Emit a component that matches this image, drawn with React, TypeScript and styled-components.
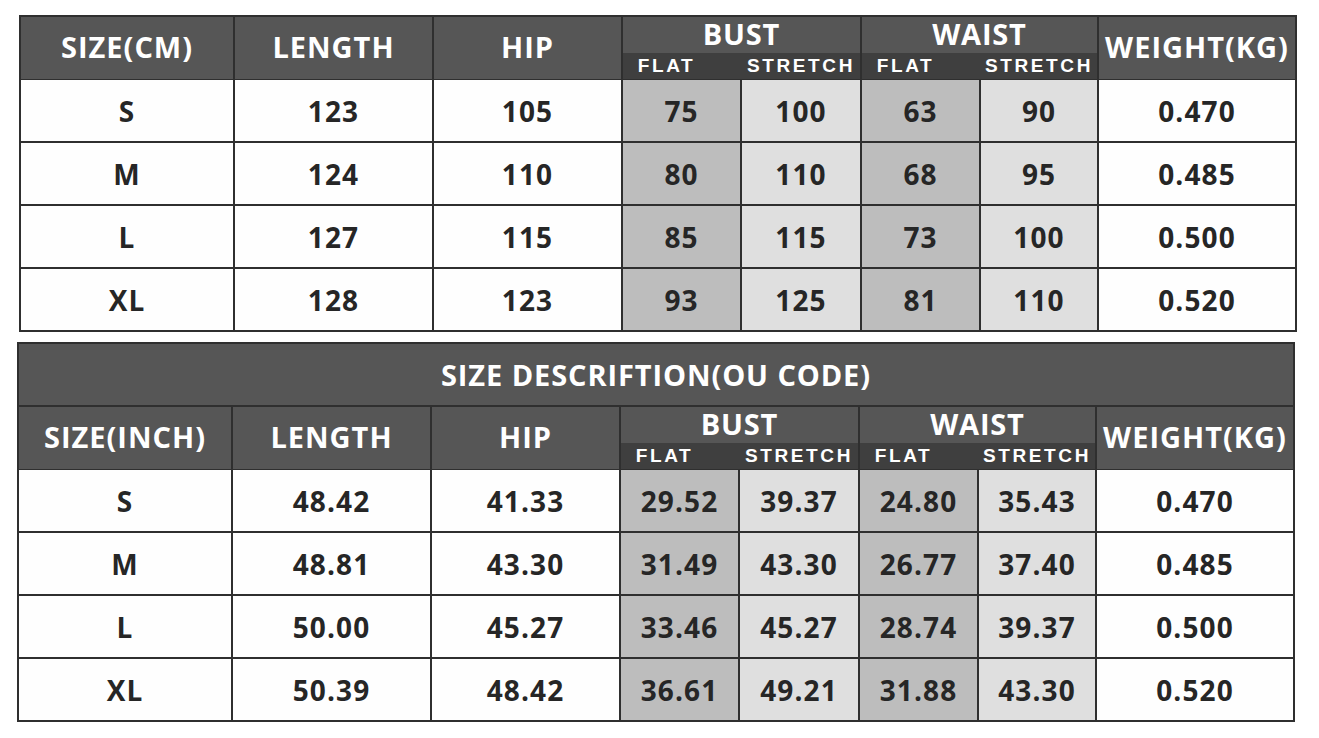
import React, { ReactElement } from 'react';
import styled, { createGlobalStyle } from 'styled-components';

const GlobalStyle = createGlobalStyle`
  body {
    margin: 0;
    background: #fff;
    font-family: 'Open Sans', 'Liberation Sans', sans-serif;
  }
`;

const Page = styled.div`
  width: 1319px;
  height: 738px;
  padding-top: 15px;
  box-sizing: border-box;
  display: flex;
  flex-direction: column;
  gap: 10px;
`;

const Table = styled.div<{ $offset: number }>`
  margin-left: ${(p) => p.$offset}px;
  width: 1278px;
  box-sizing: border-box;
  display: grid;
  grid-template-columns: 212px 197px 187px 117px 118px 117px 116px 196px;
  grid-auto-rows: 61px;
  gap: 2px;
  padding: 2px;
  background: #2f2f2f;
`;

const Title = styled.div`
  grid-column: 1 / -1;
  background: #565656;
  color: #fff;
  font-weight: 700;
  font-size: 29px;
  letter-spacing: 0.9px;
  display: flex;
  align-items: center;
  justify-content: center;
`;

const HeadCell = styled.div`
  background: #565656;
  color: #fff;
  font-weight: 700;
  font-size: 29px;
  letter-spacing: 1px;
  display: flex;
  align-items: center;
  justify-content: center;
  height: 62px;
  padding-bottom: 3px;
  box-sizing: border-box;
`;

const Group = styled.div`
  grid-column: span 2;
  height: 62px;
  display: flex;
  flex-direction: column;
  background: #565656;
  color: #fff;
`;

const GroupTitle = styled.div`
  flex: 1;
  display: flex;
  align-items: center;
  justify-content: center;
  font-weight: 700;
  font-size: 29px;
  letter-spacing: 0.8px;
  line-height: 1;
  padding-bottom: 3px;
`;

const SubBand = styled.div`
  height: 26px;
  display: grid;
  grid-template-columns: 117px 1fr;
  column-gap: 2px;
  background: #3f3f3f;
`;

const SubLabel = styled.div<{ $shift?: number }>`
  font-family: 'Liberation Sans', Arial, sans-serif;
  font-weight: 700;
  font-size: 19px;
  letter-spacing: 2.6px;
  line-height: 1;
  display: flex;
  align-items: center;
  justify-content: center;
  padding-bottom: 2px;
  padding-right: ${(p) => p.$shift ?? 0}px;
`;

const Cell = styled.div<{ $tone?: 'flat' | 'stretch' }>`
  background: ${(p) => (p.$tone === 'flat' ? '#bdbdbd' : p.$tone === 'stretch' ? '#dfdfdf' : '#fefefe')};
  color: #262626;
  font-weight: 700;
  font-size: 28px;
  letter-spacing: 1.1px;
  display: flex;
  align-items: center;
  justify-content: center;
`;

const HeaderRow = ({ size }: { size: string }): ReactElement => (
  <>
    <HeadCell>{size}</HeadCell>
    <HeadCell>LENGTH</HeadCell>
    <HeadCell>HIP</HeadCell>
    {['BUST', 'WAIST'].map((g) => (
      <Group key={g}>
        <GroupTitle>{g}</GroupTitle>
        <SubBand>
          <SubLabel $shift={30}>FLAT</SubLabel>
          <SubLabel>STRETCH</SubLabel>
        </SubBand>
      </Group>
    ))}
    <HeadCell>WEIGHT(KG)</HeadCell>
  </>
);

const tones: (undefined | 'flat' | 'stretch')[] = [
  undefined, undefined, undefined, 'flat', 'stretch', 'flat', 'stretch', undefined,
];

const cmRows: string[][] = [
  ['S', '123', '105', '75', '100', '63', '90', '0.470'],
  ['M', '124', '110', '80', '110', '68', '95', '0.485'],
  ['L', '127', '115', '85', '115', '73', '100', '0.500'],
  ['XL', '128', '123', '93', '125', '81', '110', '0.520'],
];

const inchRows: string[][] = [
  ['S', '48.42', '41.33', '29.52', '39.37', '24.80', '35.43', '0.470'],
  ['M', '48.81', '43.30', '31.49', '43.30', '26.77', '37.40', '0.485'],
  ['L', '50.00', '45.27', '33.46', '45.27', '28.74', '39.37', '0.500'],
  ['XL', '50.39', '48.42', '36.61', '49.21', '31.88', '43.30', '0.520'],
];

const Rows = ({ rows }: { rows: string[][] }): ReactElement => (
  <>
    {rows.map((row) =>
      row.map((v, i) => (
        <Cell key={row[0] + i} $tone={tones[i]}>
          {v}
        </Cell>
      )),
    )}
  </>
);

const App = (): ReactElement => (
  <Page>
    <GlobalStyle />
    <Table $offset={19}>
      <HeaderRow size="SIZE(CM)" />
      <Rows rows={cmRows} />
    </Table>
    <Table $offset={17}>
      <Title>SIZE DESCRIFTION(OU CODE)</Title>
      <HeaderRow size="SIZE(INCH)" />
      <Rows rows={inchRows} />
    </Table>
  </Page>
);

export default App;
